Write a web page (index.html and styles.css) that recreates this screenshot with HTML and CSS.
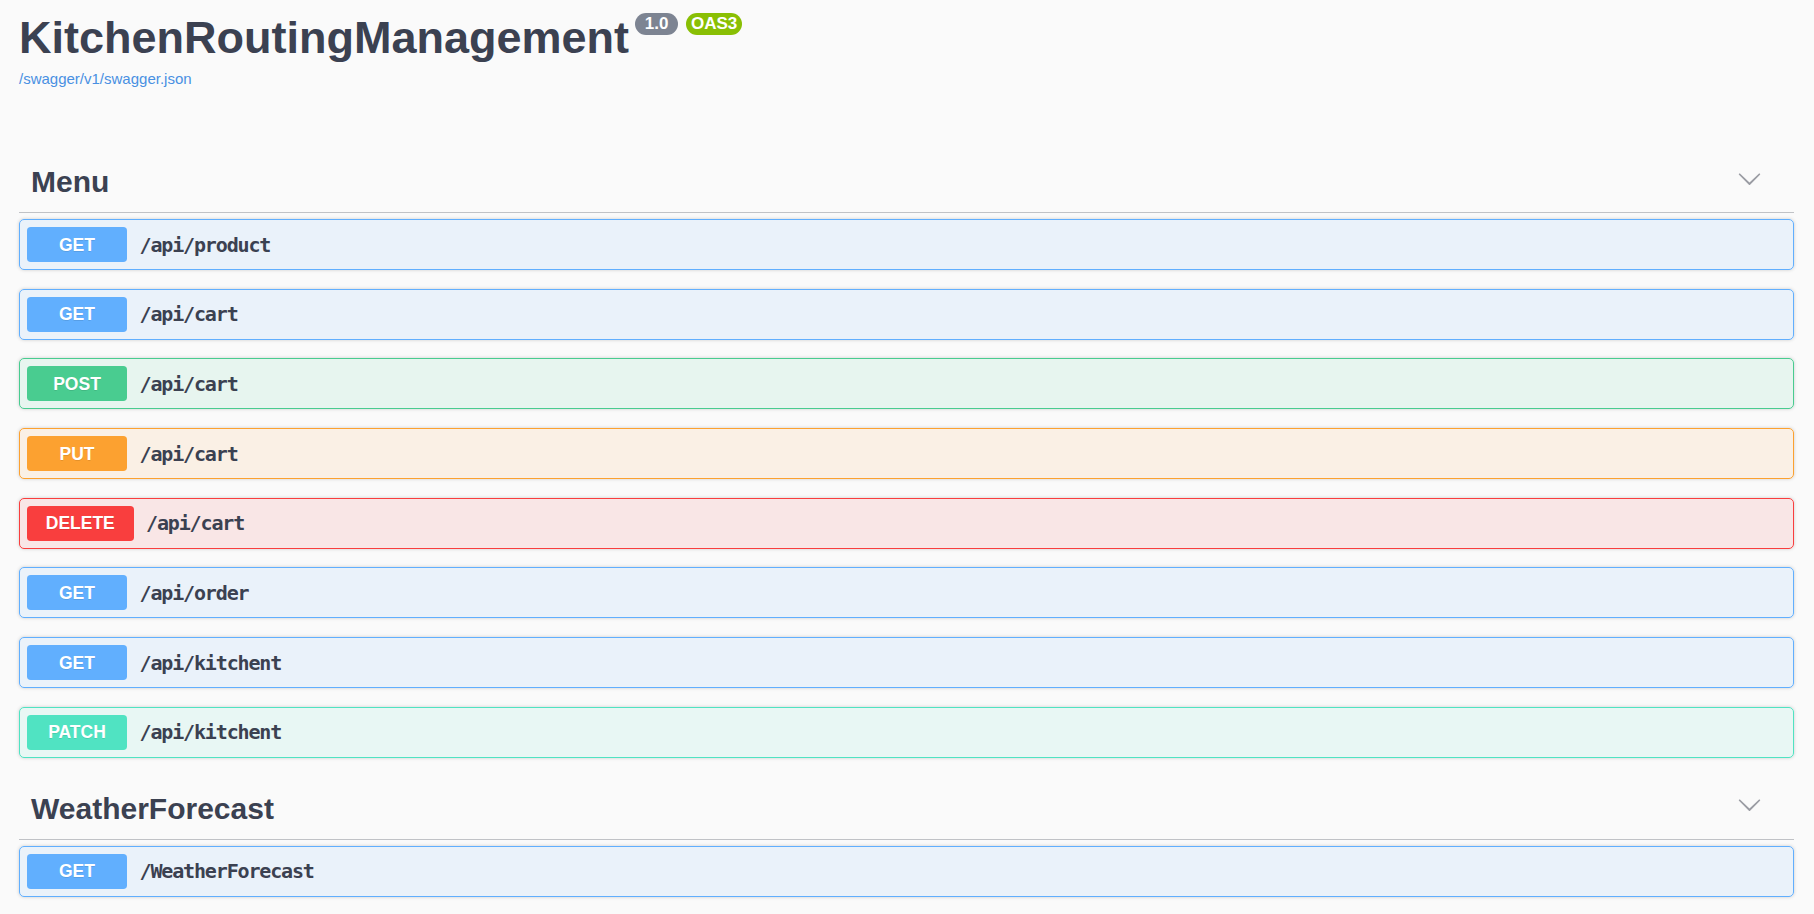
FILE: index.html
```html
<!DOCTYPE html>
<html lang="en">
<head>
<meta charset="utf-8">
<title>Swagger UI</title>
<link rel="stylesheet" href="styles.css">
</head>
<body>
<div class="wrapper">
  <div class="info">
    <h2 class="title"><span class="title-text">KitchenRoutingManagement</span><span class="badge version">1.0</span><span class="badge oas">OAS3</span></h2>
    <a class="url" href="#">/swagger/v1/swagger.json</a>
  </div>

  <section class="tag-section">
    <h3 class="tag"><span class="tag-name">Menu</span><svg class="arrow" viewBox="0 0 20 20" width="25" height="25"><path d="M17.418 6.109c.272-.268.709-.268.979 0s.27.701 0 .969l-7.908 7.83c-.27.268-.707.268-.979 0l-7.908-7.830c-.27-.268-.27-.701 0-.969.271-.268.709-.268.979 0L10 13.25l7.418-7.141z"/></svg></h3>
    <div class="opblock get"><span class="method">GET</span><span class="path">/api/product</span></div>
    <div class="opblock get"><span class="method">GET</span><span class="path">/api/cart</span></div>
    <div class="opblock post"><span class="method">POST</span><span class="path">/api/cart</span></div>
    <div class="opblock put"><span class="method">PUT</span><span class="path">/api/cart</span></div>
    <div class="opblock delete"><span class="method">DELETE</span><span class="path">/api/cart</span></div>
    <div class="opblock get"><span class="method">GET</span><span class="path">/api/order</span></div>
    <div class="opblock get"><span class="method">GET</span><span class="path">/api/kitchent</span></div>
    <div class="opblock patch"><span class="method">PATCH</span><span class="path">/api/kitchent</span></div>
  </section>

  <section class="tag-section">
    <h3 class="tag"><span class="tag-name">WeatherForecast</span><svg class="arrow" viewBox="0 0 20 20" width="25" height="25"><path d="M17.418 6.109c.272-.268.709-.268.979 0s.27.701 0 .969l-7.908 7.83c-.27.268-.707.268-.979 0l-7.908-7.830c-.27-.268-.27-.701 0-.969.271-.268.709-.268.979 0L10 13.25l7.418-7.141z"/></svg></h3>
    <div class="opblock get"><span class="method">GET</span><span class="path">/WeatherForecast</span></div>
  </section>
</div>
</body>
</html>
```

FILE: styles.css
```css
* {
  box-sizing: border-box;
}

html,
body {
  margin: 0;
  background: #fafafa;
}

body {
  font-family: "Liberation Sans", Arial, sans-serif;
  color: #3b4151;
}

.wrapper {
  padding: 12px 20px 0 19px;
}

.info {
  margin-bottom: 65px;
}

.title {
  margin: 0;
  display: flex;
  align-items: flex-start;
  font-size: 45px;
  line-height: 52px;
  font-weight: 700;
  color: #3b4151;
}

.badge {
  margin-top: 1px;
  height: 22px;
  font-size: 17px;
  line-height: 22px;
  font-weight: 700;
  color: #fff;
  border-radius: 60px;
}

.version {
  margin-left: 6px;
  padding: 0 9.7px;
  background: #7d8492;
}

.oas {
  margin-left: 8px;
  padding: 0 5px;
  background: #89bf04;
}

.url {
  display: block;
  margin-top: 6px;
  font-size: 15px;
  line-height: 17px;
  color: #4990e2;
  text-decoration: none;
}

.tag-section + .tag-section {
  margin-top: 21px;
}

.tag {
  margin: 0 0 6px;
  padding: 12px 32px 12px 12px;
  display: flex;
  align-items: center;
  justify-content: space-between;
  border-bottom: 1px solid rgba(59, 65, 81, 0.3);
  font-size: 30px;
  line-height: 36px;
  font-weight: 700;
  color: #3b4151;
}

.arrow {
  display: block;
  margin-bottom: 8px;
  fill: #9a9ca3;
}

.opblock {
  display: flex;
  align-items: center;
  margin-bottom: 18.7px;
  padding: 7px;
  border: 1px solid #000;
  border-radius: 5px;
  box-shadow: 0 0 3.75px rgba(0, 0, 0, 0.19);
}

.method {
  min-width: 100px;
  padding: 7.5px 18.75px;
  font-size: 17.5px;
  line-height: 20px;
  font-weight: 700;
  text-align: center;
  color: #fff;
  border-radius: 3.75px;
  text-shadow: 0 1px 0 rgba(0, 0, 0, 0.1);
}

.path {
  padding: 0 12.5px;
  font-family: "DejaVu Sans Mono", "Liberation Mono", monospace;
  font-size: 20px;
  font-weight: 700;
  letter-spacing: -1.15px;
  color: #3b4151;
}

.get {
  border-color: #61affe;
  background: rgba(97, 175, 254, 0.1);
}
.get .method {
  background: #61affe;
}

.post {
  border-color: #49cc90;
  background: rgba(73, 204, 144, 0.1);
}
.post .method {
  background: #49cc90;
}

.put {
  border-color: #fca130;
  background: rgba(252, 161, 48, 0.1);
}
.put .method {
  background: #fca130;
}

.delete {
  border-color: #f93e3e;
  background: rgba(249, 62, 62, 0.1);
}
.delete .method {
  background: #f93e3e;
}

.patch {
  border-color: #50e3c2;
  background: rgba(80, 227, 194, 0.1);
}
.patch .method {
  background: #50e3c2;
}
```
